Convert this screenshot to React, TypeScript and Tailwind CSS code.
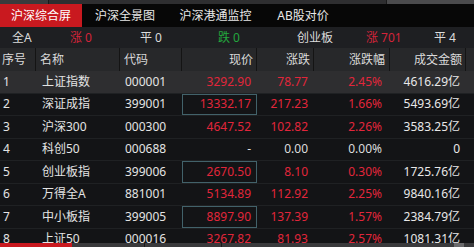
import React from "react";

type Row = {
  no: string;
  name: string;
  code: string;
  price: string;
  chg: string;
  pct: string;
  amt: string;
  boxed?: boolean;
  flat?: boolean;
};

const rows: Row[] = [
  { no: "1", name: "上证指数", code: "000001", price: "3292.90", chg: "78.77", pct: "2.45%", amt: "4616.29亿" },
  { no: "2", name: "深证成指", code: "399001", price: "13332.17", chg: "217.23", pct: "1.66%", amt: "5493.69亿", boxed: true },
  { no: "3", name: "沪深300", code: "000300", price: "4647.52", chg: "102.82", pct: "2.26%", amt: "3583.25亿" },
  { no: "4", name: "科创50", code: "000688", price: "-", chg: "0.00", pct: "0.00%", amt: "0", flat: true },
  { no: "5", name: "创业板指", code: "399006", price: "2670.50", chg: "8.10", pct: "0.30%", amt: "1725.76亿", boxed: true },
  { no: "6", name: "万得全A", code: "881001", price: "5134.89", chg: "112.92", pct: "2.25%", amt: "9840.16亿" },
  { no: "7", name: "中小板指", code: "399005", price: "8897.90", chg: "137.39", pct: "1.57%", amt: "2384.79亿", boxed: true },
  { no: "8", name: "上证50", code: "000016", price: "3267.82", chg: "81.93", pct: "2.57%", amt: "1081.31亿" },
];

const cols = "grid grid-cols-[36px_84px_62px_75px_57px_76px_76px_1fr]";

export default function App() {
  return (
    <div
      className="w-[474px] h-[247px] overflow-hidden bg-[#131416] text-[12px] text-[#e4e4e4] flex flex-col"
      style={{ fontFamily: '"Noto Sans", "Noto Sans CJK SC", sans-serif' }}
    >
      {/* top strip */}
      <div className="h-[4px] shrink-0 flex bg-[#3a3a3c]">
        <div className="w-[49px] border-r border-[#1a1a1a]" />
        <div className="w-[338px] bg-[#2e2e30] border-r border-[#1a1a1a]" />
        <div className="flex-1 bg-[#4a4a4c]" />
      </div>

      {/* tabs */}
      <div className="h-[23px] shrink-0 flex bg-[#070707] text-[#e8e8e8]">
        <div className="w-[82px] bg-[#c9191f] flex items-center justify-center text-white">沪深综合屏</div>
        <div className="w-[86px] flex items-center justify-center">沪深全景图</div>
        <div className="w-[95px] flex items-center justify-center">沪深港通监控</div>
        <div className="w-[80px] flex items-center justify-center">AB股对价</div>
      </div>

      {/* stats */}
      <div className="h-[21px] shrink-0 grid grid-cols-[70px_70px_78px_79px_69px_68px_1fr] items-center bg-[#1e1f22] text-[#dcdcdc]">
        <div className="pl-[12px]">全A</div>
        <div className="text-[#d4243a]">涨 0</div>
        <div>平 0</div>
        <div className="text-[#23a83e]">跌 0</div>
        <div>创业板</div>
        <div className="text-[#d4243a]">涨 701</div>
        <div>平 4</div>
      </div>

      {/* header */}
      <div className={`${cols} h-[23px] shrink-0 bg-[#27282a] text-[#dadada]`}>
        <div className="flex items-center pl-[2px] border-r border-[#141414]">序号</div>
        <div className="flex items-center pl-[4px] border-r border-[#141414]">名称</div>
        <div className="flex items-center pl-[4px] border-r border-[#141414]">代码</div>
        <div className="flex items-center justify-end pr-[3px] border-r border-[#141414]">现价</div>
        <div className="flex items-center justify-end pr-[3px] border-r border-[#141414]">涨跌</div>
        <div className="flex items-center justify-end pr-[4px] border-r border-[#141414]">涨跌幅</div>
        <div className="flex items-center justify-end pr-[3px] border-r border-[#141414]">成交金额</div>
        <div />
      </div>

      {/* rows */}
      <div className="flex-1 overflow-hidden">
        {rows.map((r, i) => {
          const val = r.flat ? "text-[#dcdcdc]" : "text-[#e2263b]";
          return (
            <div
              key={r.no}
              className={`${cols} h-[22.5px] border-b border-[#1f2123] ${i === 0 ? "bg-[#2e2e30]" : "bg-[#131416]"}`}
            >
              <div className="flex items-center pl-[3px]">{r.no}</div>
              <div className="flex items-center pl-[6px]">{r.name}</div>
              <div className="flex items-center pl-[5px]">{r.code}</div>
              <div
                className={`flex items-center justify-end pr-[5px] ${val} ${
                  r.boxed ? "border border-[#42626a]" : "border border-transparent"
                }`}
              >
                {r.price}
              </div>
              <div className={`flex items-center justify-end pr-[6px] ${val}`}>{r.chg}</div>
              <div className={`flex items-center justify-end pr-[8px] ${val}`}>{r.pct}</div>
              <div className="flex items-center justify-end pr-[6px] text-[#e8e8e8]">{r.amt}</div>
              <div />
            </div>
          );
        })}
      </div>

      {/* bottom bar */}
      <div className="h-[4px] shrink-0 flex bg-[#3a3a3c]">
        <div className="w-[72px] bg-[#c9191f]" />
        <div className="w-[73px] border-r border-[#1a1a1a]" />
        <div className="w-[77px] border-r border-[#1a1a1a]" />
        <div className="w-[232px]" />
        <div className="w-[10px] bg-[#6a6a6c]" />
      </div>
    </div>
  );
}
